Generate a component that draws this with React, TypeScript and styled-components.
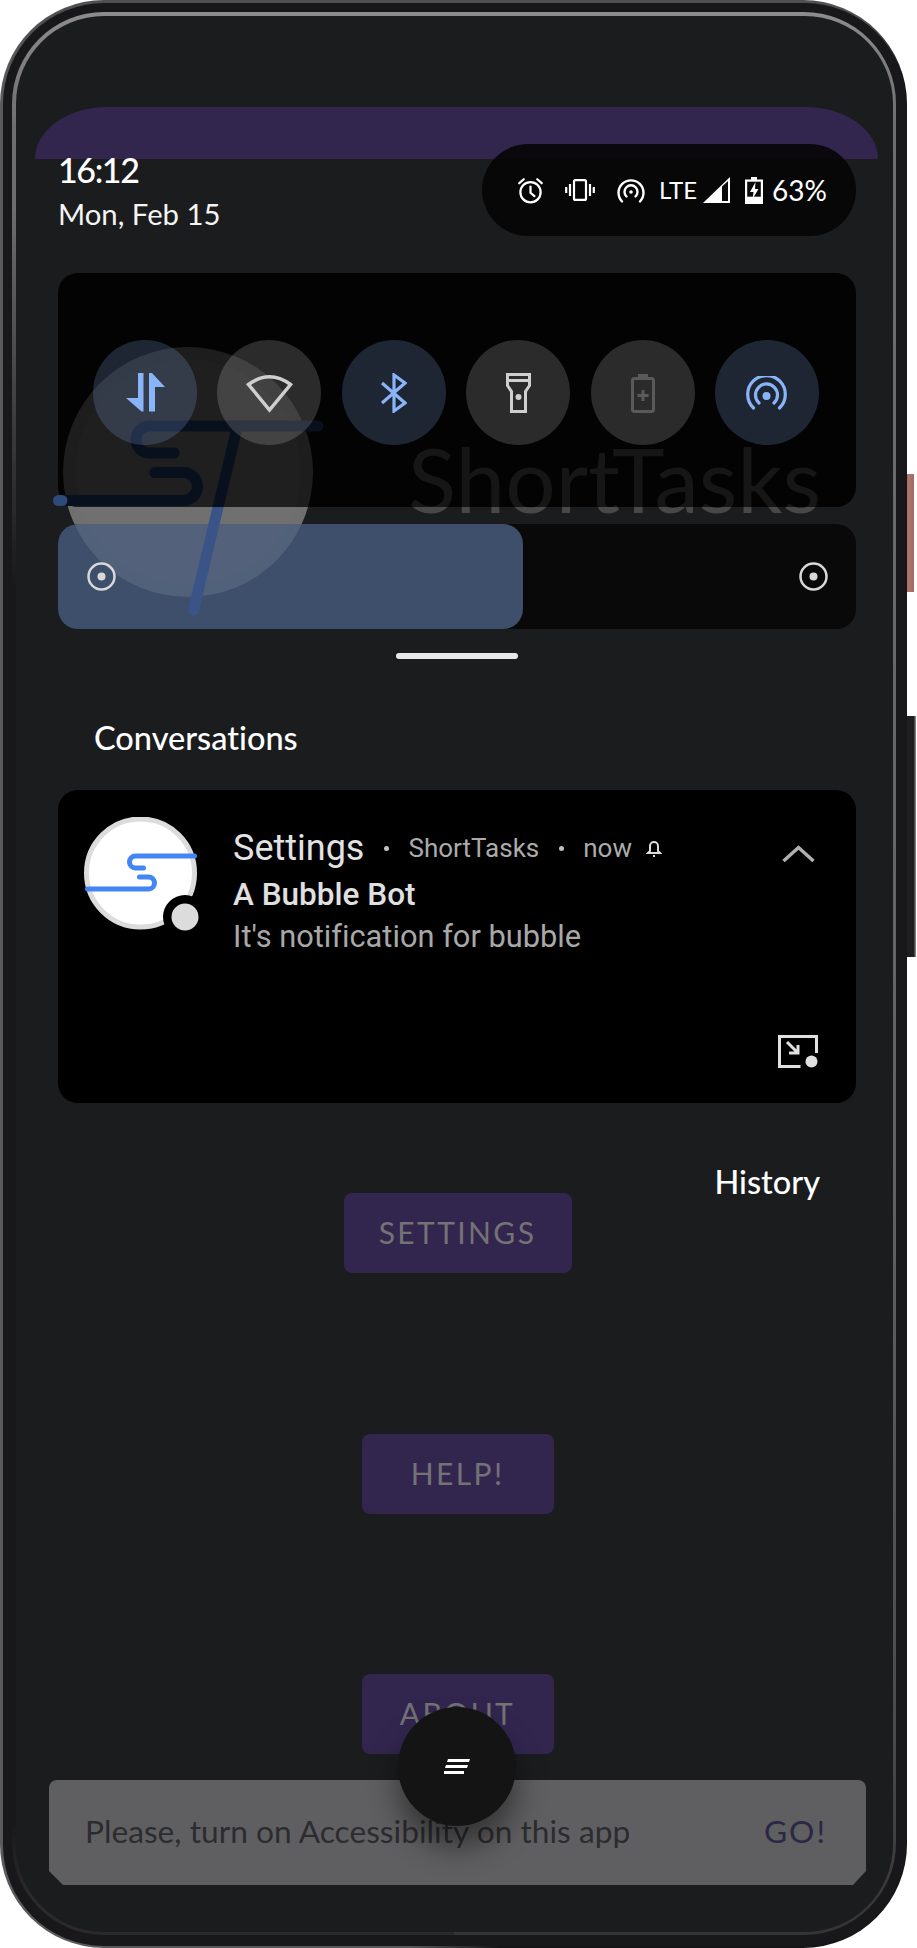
import React from "react";
import styled, { createGlobalStyle } from "styled-components";

const Global = createGlobalStyle`
  html, body { margin: 0; padding: 0; background: #fff; }
  body { font-family: Roboto, "Liberation Sans", sans-serif; font-variant-ligatures: none; }
`;

const DISPLAY = `Lato, Roboto, sans-serif`;

const Stage = styled.div`
  position: relative;
  width: 917px;
  height: 1948px;
  overflow: hidden;
  background: #fff;
`;
const SideKey = styled.div<{ $top: number; $h: number; $copper?: boolean }>`
  position: absolute;
  top: ${(p) => p.$top}px;
  height: ${(p) => p.$h}px;
  left: 900px;
  width: ${(p) => (p.$copper ? 14 : 16)}px;
  background: ${(p) => (p.$copper ? "linear-gradient(90deg,#6e3c38,#b0786c 60%,#a06a60)" : "linear-gradient(90deg,#1e1e20 85%,#9a9a9a)")};
`;
const Phone = styled.div`
  position: absolute;
  left: 0;
  top: 0;
  width: 907px;
  height: 1948px;
  box-sizing: border-box;
  border-radius: 104px;
  padding: 3px 1px 2px 3px;
  background:
    linear-gradient(180deg, #505052 0, #505052 1%, transparent 4%),
    linear-gradient(90deg, #5a5a5c 0, #5a5a5c 45%, #151517 55%);
`;
const Bezel = styled.div`
  height: 100%;
  box-sizing: border-box;
  border-radius: 101px;
  padding: 9px 10px 11px 9px;
  background: #18181a;
`;
const Rim = styled.div`
  height: 100%;
  box-sizing: border-box;
  border-radius: 92px;
  padding: 4px 3px 3px 4px;
  background:
    linear-gradient(180deg, transparent 0, transparent 10%, #18181a 30%, #18181a 94%, #2a2a2c 98%) left / 50% 100% no-repeat,
    linear-gradient(180deg, #8c8c8e, #6e6e70 6%, #626264 60%, #4a4a4c 90%, #343436);
`;
const Screen = styled.div`
  position: relative;
  height: 100%;
  border-radius: 88px;
  overflow: hidden;
  background: #1b1c1e;
`;

/* Underlying app, seen through the shade. Screen starts at page x=16, y=16. */
const AppLayer = styled.div`
  position: absolute;
  left: 19px;
  right: 13px;
  top: 91px;
  bottom: 0;
  display: flex;
  flex-direction: column;
  align-items: center;
`;
const AppBar = styled.div`
  align-self: stretch;
  margin-right: 2px;
  height: 52px;
  background: #32264f;
  border-radius: 72px 72px 0 0 / 52px 52px 0 0;
`;
const AppButton = styled.div<{ $w: number; $mt: number }>`
  width: ${(p) => p.$w}px;
  height: 80px;
  margin-top: ${(p) => p.$mt}px;
  box-sizing: border-box;
  padding-bottom: 3px;
  display: flex;
  align-items: center;
  justify-content: center;
  border-radius: 8px;
  background: #32264f;
  color: #757276;
  font-family: ${DISPLAY};
  font-size: 30px;
  letter-spacing: 2.4px;
`;
const Snackbar = styled.div`
  margin-top: 26px;
  align-self: stretch;
  margin-left: 14px;
  margin-right: 14px;
  height: 105px;
  box-sizing: border-box;
  padding: 0 39px 3px 36px;
  display: flex;
  align-items: center;
  justify-content: space-between;
  background: #5f5f61;
  border-radius: 8px 8px 0 0;
  clip-path: polygon(0 0, 100% 0, 100% 91px, calc(100% - 13px) 100%, 14px 100%, 0 91px);
  font-family: ${DISPLAY};
  font-size: 31.7px;
`;
const SnackText = styled.span`
  color: #2c2c2f;
`;
const SnackAction = styled.span`
  color: #2a2844;
  letter-spacing: 2px;
`;
const BackCircle = styled.div`
  position: absolute;
  left: 47px;
  top: 331px;
  width: 250px;
  height: 250px;
  border-radius: 50%;
  background: #5f5f5f;
`;

const Shade = styled.div`
  position: relative;
  height: 100%;
  box-sizing: border-box;
  padding: 0 37px 0 42px;
`;
const StatusRow = styled.div`
  display: flex;
  justify-content: space-between;
  align-items: flex-start;
  height: 257px;
  box-sizing: border-box;
  padding-top: 128px;
`;
const Clock = styled.div`
  padding: 7px 0 0 0;
  font-family: ${DISPLAY};
`;
const Time = styled.div`
  color: #fff;
  font-size: 34px;
  line-height: 38px;
  font-weight: 500;
  letter-spacing: -1.4px;
`;
const DateText = styled.div`
  color: #f4f4f4;
  font-size: 29.3px;
  line-height: 38px;
  margin-top: 6px;
`;
const StatusPill = styled.div`
  width: 374px;
  height: 92px;
  box-sizing: border-box;
  padding: 0 0 0 35px;
  border-radius: 46px;
  background: rgba(5, 5, 5, 0.9);
  display: flex;
  align-items: center;
  color: #fff;
  font-family: ${DISPLAY};
`;
const StatusText = styled.span<{ $size: number; $ml: number }>`
  font-size: ${(p) => p.$size}px;
  margin-left: ${(p) => p.$ml}px;
  color: #fff;
  line-height: 1;
`;
const StatusIcon = styled.svg<{ $ml: number }>`
  margin-left: ${(p) => p.$ml}px;
  flex: none;
`;
const QsPanel = styled.div`
  height: 234px;
  box-sizing: border-box;
  padding: 67px 37px 0 35px;
  background: #030303;
  border-radius: 20px;
  display: flex;
  justify-content: space-between;
  align-items: flex-start;
`;
const Tile = styled.div<{ $on?: boolean }>`
  position: relative;
  z-index: 3;
  width: 104px;
  height: 105px;
  border-radius: 50%;
  background: ${(p) => (p.$on ? "rgba(138,180,248,0.2)" : "rgba(255,255,255,0.16)")};
  display: flex;
  align-items: center;
  justify-content: center;
`;
const Slider = styled.div`
  margin-top: 17px;
  height: 105px;
  background: #090909;
  border-radius: 20px;
  position: relative;
  display: flex;
  align-items: center;
  justify-content: space-between;
  padding: 0 28px 0 29px;
`;
const SliderFill = styled.div`
  position: absolute;
  left: 0;
  top: 0;
  bottom: 0;
  width: 465px;
  border-radius: 20px;
  background: #3d4f6a;
`;
const SliderDot = styled.svg`
  position: relative;
  z-index: 3;
`;
const Handle = styled.div`
  width: 122px;
  height: 6px;
  border-radius: 3px;
  background: #e8e8e8;
  margin: 24px auto 0;
`;
const SectionTitle = styled.div<{ $right?: boolean }>`
  color: #fff;
  font-family: ${DISPLAY};
  font-size: 32.5px;
  font-weight: 500;
  line-height: 36px;
  margin-top: 61px;
  text-align: ${(p) => (p.$right ? "right" : "left")};
  padding: ${(p) => (p.$right ? "0 36px 0 0" : "0 0 0 36px")};
`;
const Card = styled.div`
  position: relative;
  margin-top: 34px;
  height: 313px;
  background: #000;
  border-radius: 20px;
  display: flex;
  box-sizing: border-box;
  padding: 27px 38px 35px 26px;
`;
const Avatar = styled.svg`
  flex: none;
`;
const CardBody = styled.div`
  flex: 1;
  margin: 10px 0 0 31px;
  color: #e0e0e0;
`;
const CardHead = styled.div`
  display: flex;
  align-items: center;
  height: 42px;
`;
const AppName = styled.span`
  font-size: 36px;
  color: #e2e2e2;
`;
const Meta = styled.span`
  font-size: 26px;
  color: #ababab;
`;
const Dot = styled.span`
  width: 5px;
  height: 5px;
  border-radius: 50%;
  background: #c0c0c0;
  margin: 0 19.5px;
`;
const Bell = styled.svg`
  margin-left: 14px;
`;
const CardTitle = styled.div`
  font-size: 31.5px;
  line-height: 38px;
  font-weight: 500;
  color: #e0e0e0;
  margin-top: 7px;
`;
const CardText = styled.div`
  font-size: 30.8px;
  line-height: 38px;
  color: #a8a8a8;
  margin-top: 4px;
`;
const CardActions = styled.div`
  display: flex;
  flex-direction: column;
  align-items: flex-end;
  justify-content: space-between;
`;
const Chevron = styled.svg`
  display: block;
  margin: 28px 3px 0 0;
`;
const ActionIcon = styled.svg`
  display: block;
`;

const Overlay = styled.svg`
  position: absolute;
  left: 0;
  top: 0;
  z-index: 2;
  pointer-events: none;
`;
const Watermark = styled.div`
  position: absolute;
  z-index: 2;
  left: 392px;
  top: 413px;
  font-family: ${DISPLAY};
  font-size: 89px;
  line-height: 100px;
  color: transparent;
  background: linear-gradient(180deg, #161616 0, #161616 78px, #484848 78px, #484848 100%);
  -webkit-background-clip: text;
  background-clip: text;
`;
const Bubble = styled.div`
  position: absolute;
  z-index: 4;
  left: 382px;
  top: 1691px;
  width: 118px;
  height: 119px;
  border-radius: 50%;
  background: #141414;
  box-shadow: 0 20px 30px rgba(0, 0, 0, 0.45);
  display: flex;
  align-items: center;
  justify-content: center;
`;

export default function App() {
  return (
    <>
      <Global />
      <Stage>
        <SideKey $copper $top={474} $h={118} />
        <SideKey $top={716} $h={241} />
        <Phone>
          <Bezel>
            <Rim>
              <Screen>
                <AppLayer>
                  <AppBar />
                  <AppButton $w={228} $mt={1034}>SETTINGS</AppButton>
                  <AppButton $w={192} $mt={161}>HELP!</AppButton>
                  <AppButton $w={192} $mt={160}>ABOUT</AppButton>
                  <Snackbar>
                    <SnackText>Please, turn on Accessibility on this app</SnackText>
                    <SnackAction>GO!</SnackAction>
                  </Snackbar>
                </AppLayer>
                <BackCircle />
                <Shade>
                  <StatusRow>
                    <Clock>
                      <Time>16:12</Time>
                      <DateText>Mon, Feb 15</DateText>
                    </Clock>
                    <StatusPill>
                      <StatusIcon $ml={0} width="27" height="27" viewBox="0 0 24 24" fill="none" stroke="#fff" strokeWidth="2" strokeLinecap="round">
                        <circle cx="12" cy="13.5" r="9" />
                        <path d="M12 8.500v5.500l3.500 3M2 5.500l4-3.500M22 5.500l-4-3.500" />
                      </StatusIcon>
                      <StatusIcon $ml={21} width="30" height="22" viewBox="0 0 30 22" fill="none" stroke="#fff" strokeWidth="2.200">
                        <rect x="9" y="1.100" width="12" height="19.800" rx="1.500" />
                        <path d="M5 5v12M25 5v12M1.200 8v6M28.800 8v6" />
                      </StatusIcon>
                      <StatusIcon $ml={22} width="28" height="25" viewBox="0 0 28 25" fill="none" stroke="#fff" strokeWidth="2.400" strokeLinecap="round">
                        <path d="M5 23.500a12.500 12.500 0 1 1 18 0" />
                        <path d="M9.500 18.500a6.500 6.500 0 1 1 9 0" />
                        <circle cx="14" cy="14" r="1.800" fill="#fff" stroke="none" />
                      </StatusIcon>
                      <StatusText $size={24} $ml={14}>LTE</StatusText>
                      <StatusIcon $ml={6} width="27" height="27" viewBox="0 0 27 27">
                        <path d="M0 26 27 0v26z" fill="#fff" />
                        <path d="M19 9.500v14.500h6V4z" fill="#0a0a0a" />
                      </StatusIcon>
                      <StatusIcon $ml={15} width="18" height="27" viewBox="0 0 18 27">
                        <path d="M6 0h6v2.500h6V27H0V2.500h6z" fill="#fff" />
                        <rect x="2.200" y="4.700" width="13.600" height="15" fill="#0a0a0a" />
                        <path d="M10.500 5 5 15h3.500L7.500 22l6-10H10z" fill="#fff" />
                      </StatusIcon>
                      <StatusText $size={28} $ml={9}>63%</StatusText>
                    </StatusPill>
                  </StatusRow>
                  <QsPanel>
                    <Tile $on>
                      <svg width="39" height="39" viewBox="0 0 39 39" fill="#8ab4f8">
                        <path d="M12 0h5.500v38.500h-2L0 25h12zM23 0h3l13 14H29v24.500h-6z" />
                      </svg>
                    </Tile>
                    <Tile>
                      <svg width="47" height="40" viewBox="0 0 47 40" fill="none" stroke="#cfcfcf" strokeWidth="3.500">
                        <path d="M2.500 11.500Q23.500 -4 44.500 11.500L23.500 37z" />
                      </svg>
                    </Tile>
                    <Tile $on>
                      <svg width="26" height="40" viewBox="0 0 26 40" fill="none" stroke="#8ab4f8" strokeWidth="3.200">
                        <path d="M1 10l23 20-11 8V2l11 8L1 30" />
                      </svg>
                    </Tile>
                    <Tile>
                      <svg width="25" height="40" viewBox="0 0 25 40" fill="none" stroke="#cfcfcf" strokeWidth="3">
                        <path d="M1.500 1.500h22v11l-4 6v20H5.500v-20l-4-6z" />
                        <path d="M1.500 7.500h22" />
                        <circle cx="12.500" cy="24" r="3" fill="#cfcfcf" stroke="none" />
                      </svg>
                    </Tile>
                    <Tile>
                      <svg width="24" height="40" viewBox="0 0 24 40" fill="none" stroke="#5a5a5a" strokeWidth="3">
                        <path d="M7 5V1h10v4z" fill="#5a5a5a" stroke="none" />
                        <rect x="1.500" y="5.500" width="21" height="33" rx="2" />
                        <path d="M12 17v11M6.500 22.500h11" />
                      </svg>
                    </Tile>
                    <Tile $on>
                      <svg width="41" height="34" viewBox="0 0 41 34" fill="none" stroke="#8ab4f8" strokeWidth="3.200" strokeLinecap="round">
                        <path d="M7.500 32a18.800 18.800 0 1 1 26 0" />
                        <path d="M13 27a11 11 0 1 1 15 0" />
                        <circle cx="20.500" cy="20" r="4" fill="#8ab4f8" stroke="none" />
                      </svg>
                    </Tile>
                  </QsPanel>
                  <Slider>
                    <SliderFill />
                    <SliderDot width="29" height="29" viewBox="0 0 29 29" fill="none" stroke="#d8d8d8" strokeWidth="2.500">
                      <circle cx="14.500" cy="14.500" r="13" />
                      <circle cx="14.500" cy="14.500" r="4" fill="#d8d8d8" stroke="none" />
                    </SliderDot>
                    <SliderDot width="29" height="29" viewBox="0 0 29 29" fill="none" stroke="#d8d8d8" strokeWidth="2.500">
                      <circle cx="14.500" cy="14.500" r="13" />
                      <circle cx="14.500" cy="14.500" r="4" fill="#d8d8d8" stroke="none" />
                    </SliderDot>
                  </Slider>
                  <Handle />
                  <SectionTitle>Conversations</SectionTitle>
                  <Card>
                    <Avatar width="118" height="118" viewBox="0 0 118 118" fill="none">
                      <circle cx="56.500" cy="56" r="54" fill="#fff" stroke="#dcdcdc" strokeWidth="5" />
                      <path d="M110.500 39H51.500a6 6 0 0 0 0 12H59.500M55.500 60H64.500a6 6 0 0 1 0 12H3.500" stroke="#4285f4" strokeWidth="5" strokeLinecap="round" />
                      <circle cx="101" cy="100" r="22" fill="#000" />
                      <circle cx="101" cy="100" r="13.500" fill="#dcdcdc" />
                    </Avatar>
                    <CardBody>
                      <CardHead>
                        <AppName>Settings</AppName>
                        <Dot />
                        <Meta>ShortTasks</Meta>
                        <Dot />
                        <Meta>now</Meta>
                        <Bell width="16" height="18" viewBox="0 0 16 18" fill="none" stroke="#ddd" strokeWidth="2">
                          <path d="M2 14h12l-2-2V7a4 4 0 0 0-8 0v5zM7 17h2" />
                        </Bell>
                      </CardHead>
                      <CardTitle>A Bubble Bot</CardTitle>
                      <CardText>It's notification for bubble</CardText>
                    </CardBody>
                    <CardActions>
                      <Chevron width="33" height="17" viewBox="0 0 33 17" fill="none" stroke="#b0b0b0" strokeWidth="3.500">
                        <path d="M1.500 16 16.500 2.500 31.500 16" />
                      </Chevron>
                      <ActionIcon width="40" height="33" viewBox="0 0 40 33" fill="none" stroke="#e0e0e0" strokeWidth="3">
                        <path d="M38.500 18V1.500h-37v30h21" />
                        <path d="M9 7l11 11M20 10v8H11" />
                        <circle cx="33.500" cy="26.500" r="6" fill="#e0e0e0" stroke="none" />
                      </ActionIcon>
                    </CardActions>
                  </Card>
                  <SectionTitle $right>History</SectionTitle>
                </Shade>

                <Overlay width="877" height="1916" viewBox="0 0 877 1916">
                  <defs>
                    <linearGradient id="sevenGrad" gradientUnits="userSpaceOnUse" x1="0" y1="0" x2="0" y2="1916">
                      <stop offset={491 / 1916} stopColor="#08101e" />
                      <stop offset={491 / 1916} stopColor="#3a5488" />
                    </linearGradient>
                  </defs>
                  <circle cx="172" cy="456" r="125" fill="rgba(255,255,255,0.107)" />
                  <circle cx="172" cy="456" r="113" fill="rgba(255,255,255,0.012)" />
                  <path d="M302 410H133.500a13.500 13.500 0 0 0 0 27H158M139 456.500H167.500a14 14 0 0 1 0 28H50" fill="none" stroke="#08101e" strokeWidth="11" strokeLinecap="round" />
                  <path d="M42.500 484.500H46" fill="none" stroke="#2e4a7a" strokeWidth="11" strokeLinecap="round" />
                  <path d="M220 416 177.500 594" fill="none" stroke="url(#sevenGrad)" strokeWidth="11" strokeLinecap="round" />
                </Overlay>
                <Watermark>ShortTasks</Watermark>
                <Bubble>
                  <svg width="26" height="15" viewBox="0 0 26 15" fill="#fff">
                    <path d="M4 0h22l-1 3H3zM2 6h22l-1 3H1zM0 12h20v3H0z" />
                  </svg>
                </Bubble>
              </Screen>
            </Rim>
          </Bezel>
        </Phone>
      </Stage>
    </>
  );
}
